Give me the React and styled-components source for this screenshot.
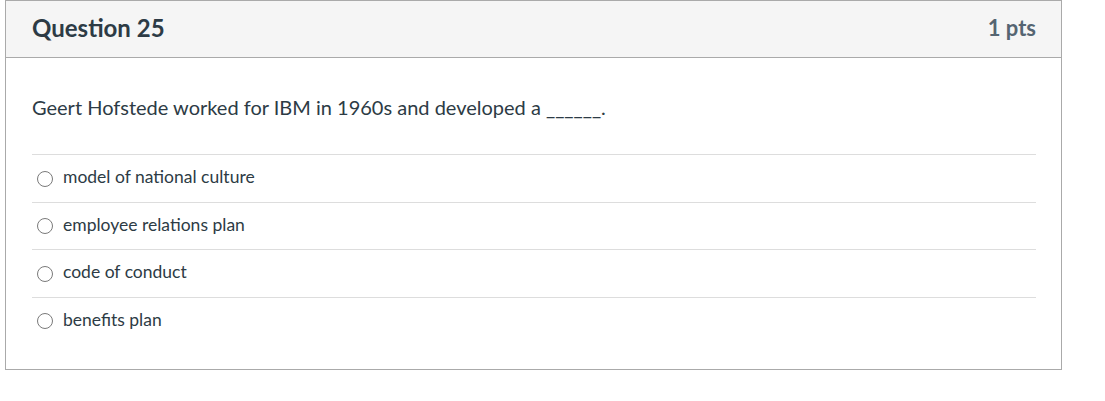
import React from 'react';
import styled, { createGlobalStyle } from 'styled-components';

const GlobalStyle = createGlobalStyle`
  body {
    margin: 0;
    background: #fff;
    font-family: Lato, "Open Sans", sans-serif;
    color: #2d3b45;
  }
`;

const Page = styled.div`
  padding: 0 5px;
`;

const Card = styled.div`
  width: 1057px;
  box-sizing: border-box;
  border: 1px solid #aaaaaa;
`;

const Header = styled.div`
  display: flex;
  align-items: center;
  justify-content: space-between;
  height: 56px;
  padding: 0 25px 0 26px;
  background: #f5f5f5;
  border-bottom: 1px solid #aaaaaa;
`;

const Title = styled.h2`
  margin: 0 0 2px;
  font-size: 24px;
  line-height: 28px;
  font-weight: 700;
  color: #2d3b45;
`;

const Points = styled.span`
  margin-bottom: 2px;
  font-size: 22px;
  line-height: 28px;
  font-weight: 700;
  color: #556572;
`;

const Body = styled.div`
  padding: 36px 25px 25px 26px;
`;

const Prompt = styled.p`
  margin: 0 0 34px;
  font-size: 20px;
  line-height: 26px;
`;

const Answers = styled.div`
  display: flex;
  flex-direction: column;
`;

const Answer = styled.label`
  display: flex;
  align-items: center;
  gap: 10px;
  padding: 10px 0 12.5px 5px;
  border-top: 1px solid #dddddd;
  font-size: 17.5px;
  line-height: 24px;
  cursor: pointer;
`;

const Radio = styled.span`
  width: 16px;
  height: 16px;
  margin-top: 3px;
  box-sizing: border-box;
  border: 1px solid #7a7a7a;
  border-radius: 50%;
  flex-shrink: 0;
`;

const options = [
  'model of national culture',
  'employee relations plan',
  'code of conduct',
  'benefits plan',
];

export default function App() {
  return (
    <Page>
      <GlobalStyle />
      <Card>
        <Header>
          <Title>Question 25</Title>
          <Points>1 pts</Points>
        </Header>
        <Body>
          <Prompt>Geert Hofstede worked for IBM in 1960s and developed a ______.</Prompt>
          <Answers>
            {options.map((o) => (
              <Answer key={o}>
                <Radio />
                {o}
              </Answer>
            ))}
          </Answers>
        </Body>
      </Card>
    </Page>
  );
}
